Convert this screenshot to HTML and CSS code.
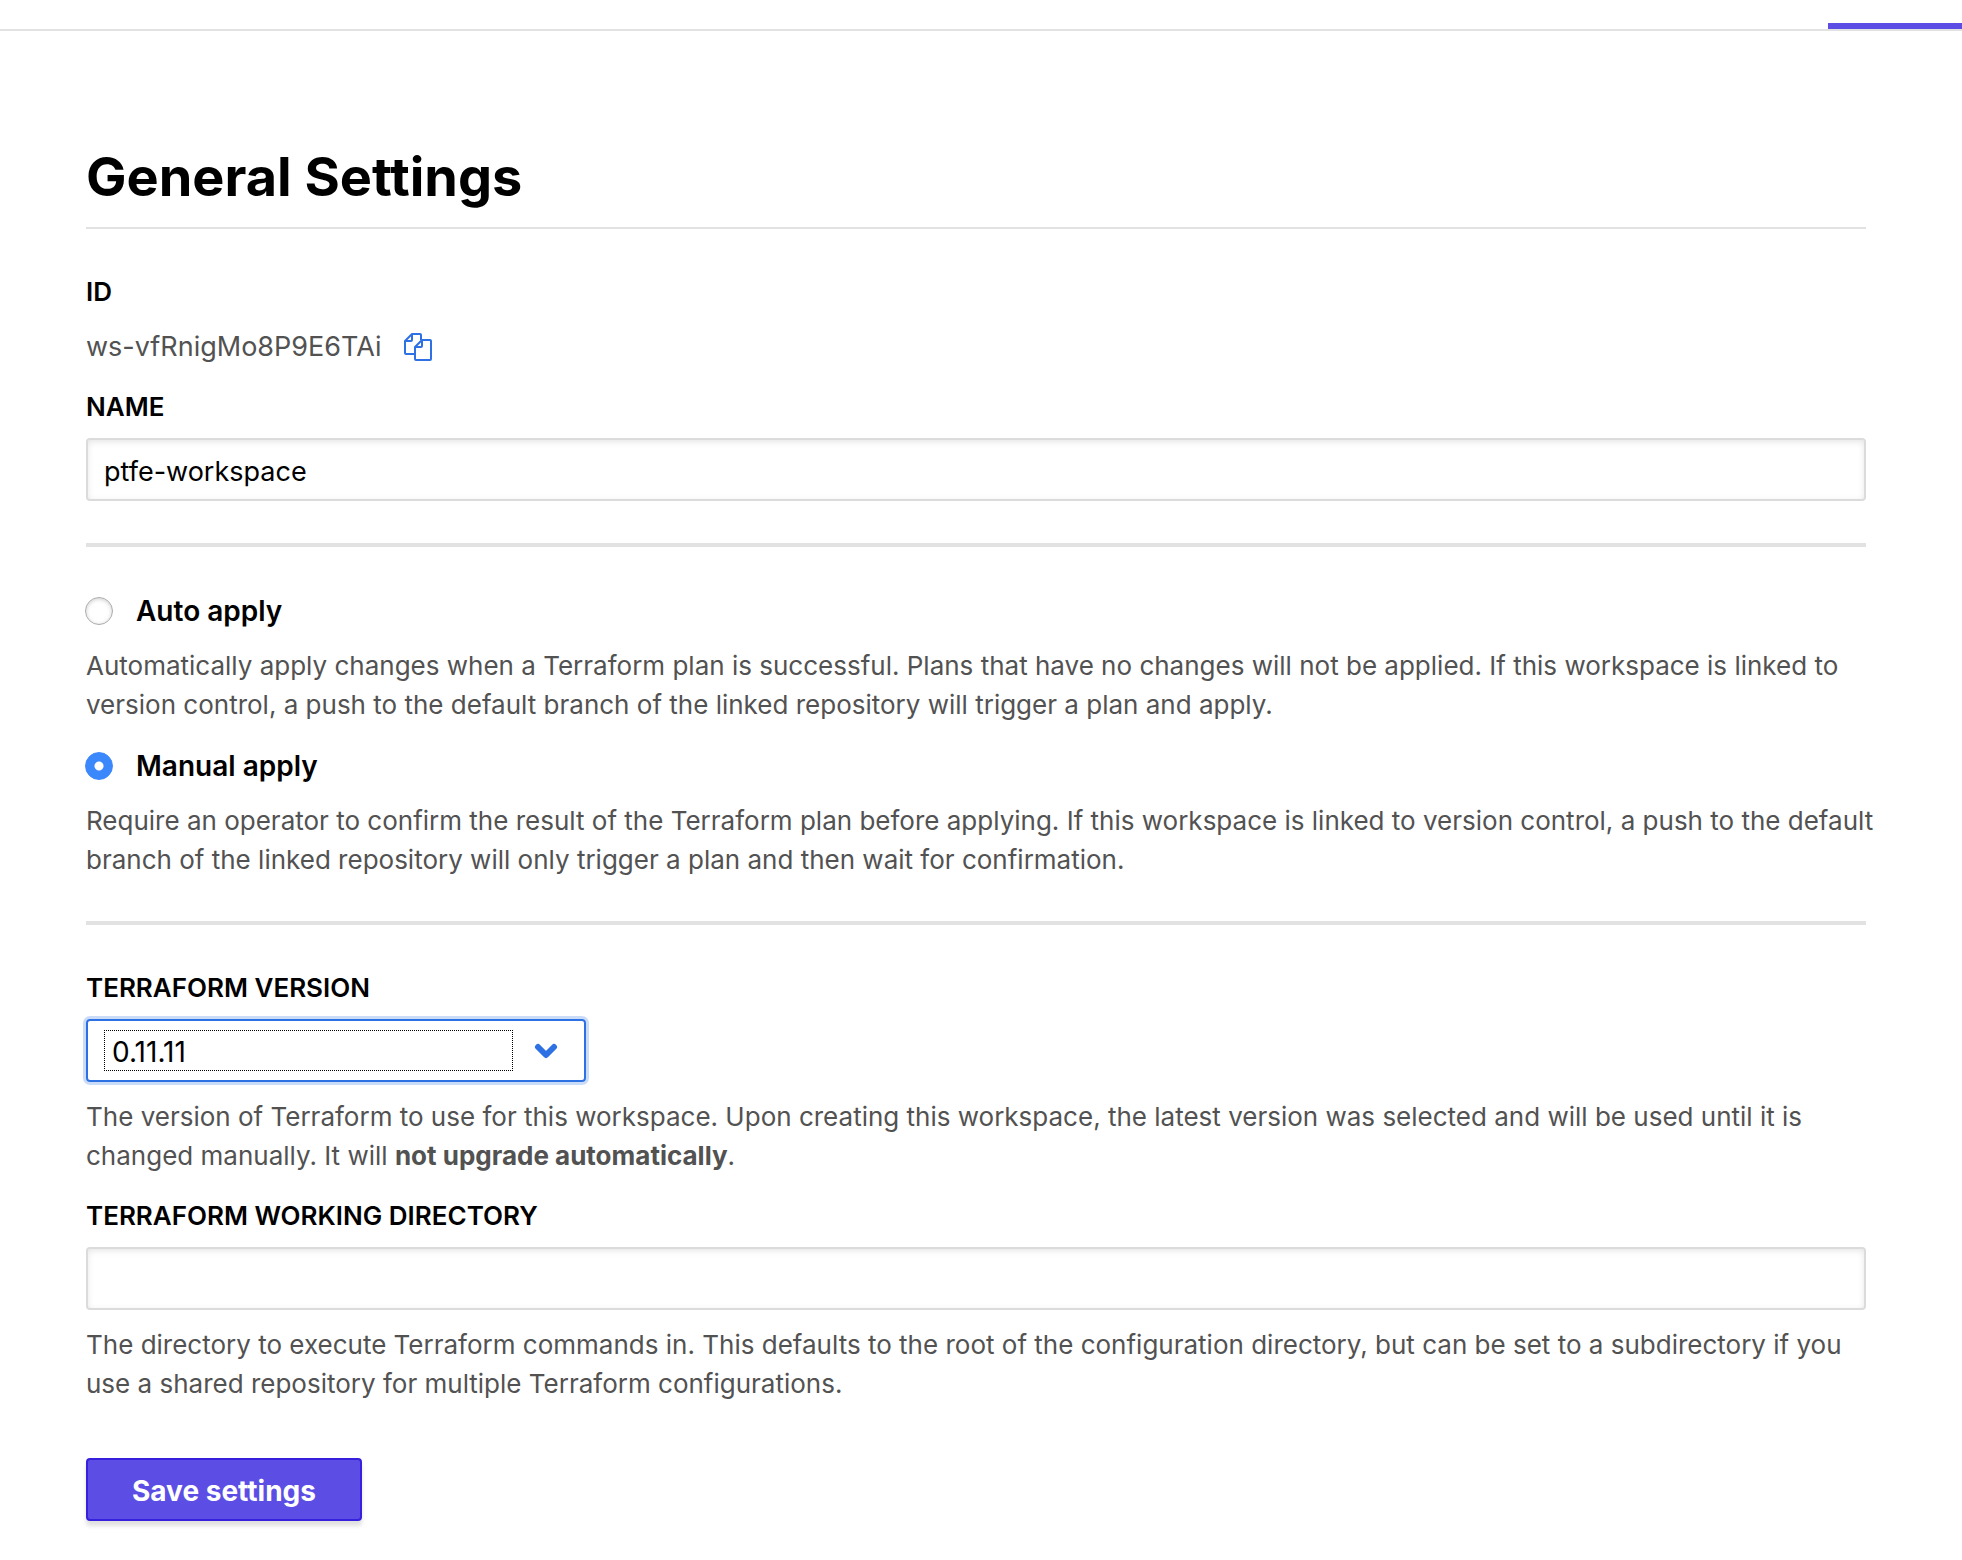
FILE: index.html
```html
<!DOCTYPE html>
<html lang="en">
<head>
<meta charset="utf-8">
<title>General Settings</title>
<link rel="stylesheet" href="styles.css">
</head>
<body>
<header class="topbar"><div class="active-tab"></div></header>
<main class="page">
  <h1 class="title">General Settings</h1>
  <form class="form">
    <section class="section">
      <div class="field">
        <h2 class="label">ID</h2>
        <div class="id-row">
          <span>ws-vfRnigMo8P9E6TAi</span>
          <button class="copy" type="button" aria-label="Copy ID">
            <svg width="30" height="30" viewBox="0 0 30 30" fill="none" stroke="currentColor" stroke-width="2" stroke-linejoin="round">
              <path d="M11 22H3Q2 22 2 21V9L9 2H17Q18 2 18 3V8M9 2V8Q9 9 8 9H2"/>
              <path d="M19 8H27Q28 8 28 9V27Q28 28 27 28H13Q12 28 12 27V15ZM19 8V14Q19 15 18 15H12"/>
            </svg>
          </button>
        </div>
      </div>
      <div class="field">
        <label class="label" for="name">NAME</label>
        <input class="input" id="name" type="text" value="ptfe-workspace">
      </div>
    </section>
    <section class="section">
      <div class="option">
        <label class="choice"><input class="radio" type="radio" name="apply">Auto apply</label>
        <p class="help">Automatically apply changes when a Terraform plan is successful. Plans that have no changes will not be applied. If this workspace is linked to version control, a push to the default branch of the linked repository will trigger a plan and apply.</p>
      </div>
      <div class="option">
        <label class="choice"><input class="radio" type="radio" name="apply" checked>Manual apply</label>
        <p class="help">Require an operator to confirm the result of the Terraform plan before applying. If this workspace is linked to version control, a push to the default branch of the linked repository will only trigger a plan and then wait for confirmation.</p>
      </div>
    </section>
    <section class="section">
      <div class="field">
        <label class="label" for="version">TERRAFORM VERSION</label>
        <div class="select-box">
          <select class="select" id="version"><option>0.11.11</option></select>
          <svg class="chevron" width="24" height="16" viewBox="0 0 24 16" fill="none" stroke="currentColor" stroke-width="6" stroke-linecap="round" stroke-linejoin="round"><path d="M4 4L12 12L20 4"/></svg>
        </div>
        <p class="help field-help">The version of Terraform to use for this workspace. Upon creating this workspace, the latest version was selected and will be used until it is changed manually. It will <strong>not upgrade automatically</strong>.</p>
      </div>
      <div class="field">
        <label class="label" for="directory">TERRAFORM WORKING DIRECTORY</label>
        <input class="input" id="directory" type="text">
        <p class="help field-help">The directory to execute Terraform commands in. This defaults to the root of the configuration directory, but can be set to a subdirectory if you use a shared repository for multiple Terraform configurations.</p>
      </div>
    </section>
    <button class="save" type="submit">Save settings</button>
  </form>
</main>
</body>
</html>
```
FILE: styles.css
```css
* { box-sizing: border-box; }

body {
  margin: 0;
  background: #fff;
  color: #000;
  font-family: Inter, "Liberation Sans", sans-serif;
  font-size: 28px;
  line-height: 42px;
}

h1, h2, p { margin: 0; }

.topbar {
  display: flex;
  justify-content: flex-end;
  padding-top: 23px;
  border-bottom: 2px solid #e2e2e2;
}

.active-tab {
  width: 134px;
  height: 6px;
  background: #5c4ee5;
}

.page { padding: 110px 96px 40px 86px; }

.title {
  padding-bottom: 14px;
  border-bottom: 2px solid #e2e2e2;
  font-size: 54px;
  font-weight: 700;
  line-height: 72px;
}

.section {
  display: flex;
  flex-direction: column;
  gap: 21px;
  padding: 43px 0 42px;
}

.section + .section { border-top: 4px solid #e2e2e2; }

.section:last-of-type { padding-bottom: 55px; }

.field, .option {
  display: flex;
  flex-direction: column;
}

.field { gap: 12px; }

.option { gap: 14px; }

.label {
  font-size: 26px;
  font-weight: 600;
  line-height: 39px;
}

.id-row {
  display: flex;
  align-items: center;
  gap: 22px;
  padding-top: 4px;
  color: #525252;
  font-size: 27px;
  line-height: 39px;
}

.copy {
  display: flex;
  padding: 0;
  border: 0;
  background: none;
  color: #2e71e5;
}

.input {
  width: 100%;
  height: 63px;
  padding: 4px 16px 0;
  border: 2px solid #dbdbdb;
  border-radius: 4px;
  background: #fff;
  box-shadow: inset 0 2px 6px rgba(0, 0, 0, 0.1);
  color: #000;
  font: inherit;
  font-size: 27px;
}

.choice {
  display: flex;
  align-items: center;
  gap: 23px;
  font-weight: 600;
}

.radio {
  appearance: none;
  width: 28px;
  height: 28px;
  margin: 0 0 0 -1px;
  border: 1px solid #acacac;
  border-radius: 50%;
  background: #fff;
  box-shadow: inset 0 1px 4px rgba(0, 0, 0, 0.2);
}

.radio:checked {
  border-color: #3b88fd;
  background: radial-gradient(circle, #fff 4px, #3b88fd 5px);
  box-shadow: none;
}

.help {
  margin-right: -24px;
  color: #525252;
  font-size: 26px;
  line-height: 39px;
}

.field-help { margin-top: 3px; }

.select-box {
  display: flex;
  align-items: center;
  gap: 21px;
  width: 500px;
  height: 63px;
  padding: 0 26px 0 16px;
  border: 2px solid #2e71e5;
  border-radius: 4px;
  box-shadow: 0 0 0 3px #cbdcf8;
}

.select {
  appearance: none;
  flex: 1;
  height: 41px;
  padding: 3px 7px 0;
  border: 1px dotted #000;
  border-radius: 0;
  outline: 0;
  background: none;
  color: #000;
  font: inherit;
  line-height: 36px;
}

.chevron { color: #2e71e5; }

.save {
  display: block;
  height: 63px;
  padding: 2px 44px 0;
  border: 2px solid #3720dd;
  border-radius: 4px;
  background: #5c4ee5;
  box-shadow: 0 5px 4px rgba(0, 0, 0, 0.12);
  color: #fff;
  font: inherit;
  font-weight: 700;
}
```
